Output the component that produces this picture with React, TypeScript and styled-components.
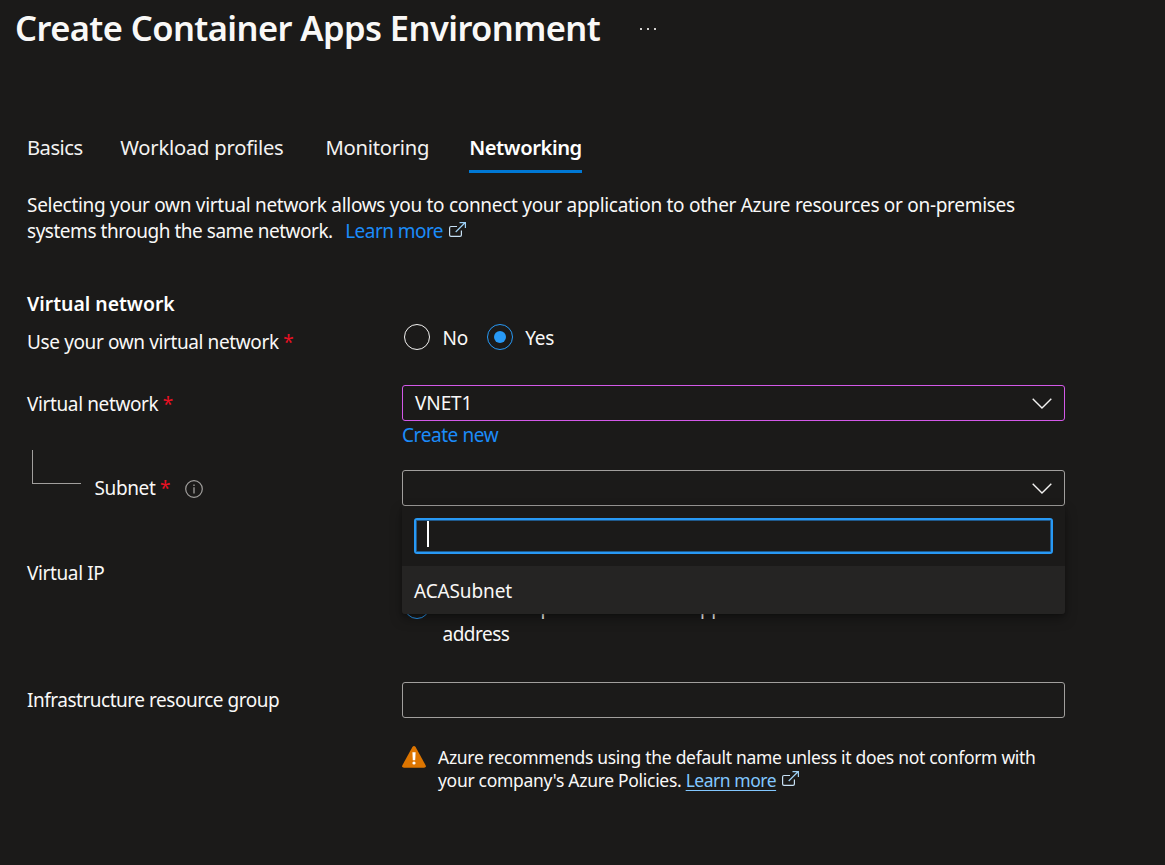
import React from 'react';
import styled, { createGlobalStyle, css } from 'styled-components';

const Global = createGlobalStyle`
  body {
    margin: 0;
    background: #1b1a19;
    color: #f9f8f7;
    font-family: "Noto Sans", sans-serif;
    font-size: 19px;
    line-height: 26px;
    letter-spacing: -0.295px;
  }
  * { box-sizing: border-box; }
`;

const Page = styled.main`
  height: 865px;
  overflow: hidden;
`;

const Header = styled.header`
  display: flex;
  align-items: center;
  height: 56px;
  padding-left: 15px;
`;

const Title = styled.h1`
  margin: 0;
  width: 623px;
  font-size: 34.5px;
  font-weight: 600;
  line-height: 56px;
  letter-spacing: -0.58px;
  white-space: nowrap;
`;

const MoreIcon = styled.svg`
  display: block;
  margin-top: 2px;
`;

const Tabs = styled.nav`
  display: flex;
  margin: 71px 0 0 27px;
`;

const Tab = styled.button<{ $active?: boolean; $gap: number; $spacing: number }>`
  height: 46px;
  margin: 0 ${(p) => p.$gap}px 0 0;
  padding: 0 0 3px;
  border: 0;
  border-bottom: 3px solid ${(p) => (p.$active ? '#0078d4' : 'transparent')};
  background: none;
  color: ${(p) => (p.$active ? '#ffffff' : '#f3f2f1')};
  font-family: inherit;
  font-size: 20.2px;
  font-weight: ${(p) => (p.$active ? 600 : 400)};
  letter-spacing: ${(p) => p.$spacing}px;
  white-space: nowrap;
`;

const Intro = styled.p`
  margin: 19px 0 0 27px;
  white-space: nowrap;
`;

const IntroEnd = styled.span`
  letter-spacing: -0.47px;
`;

const Link = styled.a<{ $inset?: number; $underlined?: boolean }>`
  margin-left: ${(p) => p.$inset ?? 0}px;
  color: #1b8cf9;
  letter-spacing: -0.55px;
  text-decoration: none;
  ${(p) =>
    p.$underlined &&
    css`
      color: #82c7ff;
      letter-spacing: -0.47px;
      text-decoration: underline;
      text-underline-offset: 3px;
      text-decoration-skip-ink: none;
    `}
`;

const OutIcon = styled.svg`
  margin-left: 6px;
  vertical-align: 1px;
`;

const SectionTitle = styled.h2`
  margin: 47px 0 7px 27px;
  font-size: 19.4px;
  font-weight: 600;
  line-height: 26px;
  letter-spacing: 0;
  color: #ffffff;
`;

const Row = styled.div<{ $height: number }>`
  display: grid;
  grid-template-columns: 375px 663px;
  align-items: start;
  height: ${(p) => p.$height}px;
  margin-left: 27px;
`;

const Label = styled.label<{ $top: number; $spacing?: number }>`
  display: flex;
  align-items: center;
  padding-top: ${(p) => p.$top}px;
  letter-spacing: ${(p) => p.$spacing ?? -0.38}px;
  white-space: nowrap;
`;

const Required = styled.span`
  margin-left: 4.5px;
  color: #e81123;
`;

const SubLabel = styled.div`
  display: flex;
  align-items: flex-start;
`;

const Connector = styled.span`
  width: 49px;
  height: 34px;
  margin: 0 13.5px 0 5px;
  border-left: 1px solid #a19f9d;
  border-bottom: 1px solid #a19f9d;
`;

const InfoIcon = styled.svg`
  margin: 1px 0 0 14.5px;
`;

const RadioGroup = styled.div<{ $top?: number }>`
  display: flex;
  gap: 19px;
  padding: ${(p) => p.$top ?? 0}px 0 0 2px;
`;

const RadioOption = styled.div`
  display: flex;
  align-items: flex-start;
  gap: 12.5px;
`;

const Radio = styled.span<{ $checked?: boolean }>`
  display: grid;
  place-items: center;
  flex: none;
  width: 26px;
  height: 26px;
  border: 1.5px solid ${(p) => (p.$checked ? '#2899f5' : '#f3f2f1')};
  border-radius: 50%;

  &::after {
    content: '';
    width: 12px;
    height: 12px;
    border-radius: 50%;
    background: ${(p) => (p.$checked ? '#2899f5' : 'transparent')};
  }
`;

const RadioText = styled.span`
  padding-top: 1px;
`;

const RadioParagraph = styled.span`
  padding-top: 1px;
  line-height: 27px;
  letter-spacing: -0.5px;
`;

const Field = styled.div<{ $top?: number }>`
  position: relative;
  padding-top: ${(p) => p.$top ?? 0}px;
`;

const SelectBox = styled.div<{ $color: string }>`
  display: flex;
  align-items: center;
  justify-content: space-between;
  height: 36px;
  padding: 0 12px;
  border: 1px solid ${(p) => p.$color};
  border-radius: 3px;
  letter-spacing: -0.1px;
`;

const CreateNew = styled.a`
  display: block;
  padding-top: 1px;
  color: #1b8cf9;
  letter-spacing: -0.42px;
`;

const Menu = styled.div`
  position: absolute;
  z-index: 1;
  top: 56px;
  left: 0;
  width: 663px;
  border-radius: 0 0 3px 3px;
  background: #1b1a19;
  box-shadow: 0 5px 12px rgba(0, 0, 0, 0.34), 0 1px 3px rgba(0, 0, 0, 0.2);
`;

const Search = styled.div`
  height: 36px;
  margin: 12px;
  padding: 1px 11px;
  border: 2px solid #2899f5;
  border-radius: 3px;
  box-shadow: inset 0 0 0 1px #205a8c;
`;

const Caret = styled.span`
  display: block;
  width: 2px;
  height: 26px;
  background: #ffffff;
`;

const Option = styled.div`
  height: 48px;
  padding-left: 12px;
  border-radius: 0 0 3px 3px;
  background: #252423;
  line-height: 50px;
  letter-spacing: -0.12px;
`;

const Notice = styled.div`
  display: flex;
  align-items: flex-start;
  gap: 12px;
  margin: 28px 0 0 402px;
  font-size: 17.5px;
  line-height: 23px;
  letter-spacing: -0.3px;
  white-space: nowrap;
`;

const ChevronDown = () => (
  <svg width="20" height="11" viewBox="0 0 20 11" fill="none" stroke="#f3f2f1" strokeWidth="1.4">
    <path d="M0.7 0.8L10 10L19.3 0.8" />
  </svg>
);

const OpenOut = () => (
  <OutIcon width="17" height="15" viewBox="0 0 17 15" fill="none" strokeWidth="1.2">
    <path d="M8 4.5H2Q.6 4.5 .6 5.9V13Q.6 14.4 2 14.4H11Q12.4 14.4 12.4 13V8.5" stroke="#c7e0f4" />
    <path d="M6.7 10L16 .8M10.5 .6H16.4V6" stroke="#9dd0f5" />
  </OutIcon>
);

const Warning = () => (
  <svg width="24" height="22" viewBox="0 0 24 22">
    <path d="M10.4 1Q12 -1 13.6 1L23.6 19.2Q24.5 21.6 22 21.8H2Q-.5 21.6 .4 19.2Z" fill="#dd7500" />
    <path d="M10.4 6.2H13.6L13.2 14.3H10.8Z" fill="#fff" />
    <circle cx="12" cy="17" r="1.6" fill="#fff" />
  </svg>
);

export default function App() {
  return (
    <Page>
      <Global />
      <Header>
        <Title>Create Container Apps Environment</Title>
        <MoreIcon width="20" height="4" viewBox="0 0 20 4" fill="#d2d0ce">
          <rect x="2" y="1" width="2" height="2" />
          <rect x="9" y="1" width="2" height="2" />
          <rect x="16" y="1" width="2" height="2" />
        </MoreIcon>
      </Header>

      <Tabs>
        <Tab $gap={37.5} $spacing={-0.5}>Basics</Tab>
        <Tab $gap={42} $spacing={-0.22}>Workload profiles</Tab>
        <Tab $gap={40} $spacing={-0.25}>Monitoring</Tab>
        <Tab $gap={0} $spacing={-0.45} $active>Networking</Tab>
      </Tabs>

      <Intro>
        Selecting your own virtual network allows you to connect your application to other Azure resources or on-premises
        <br />
        <IntroEnd>systems through the same network.</IntroEnd>
        <Link $inset={12.5}>Learn more</Link>
        <OpenOut />
      </Intro>

      <SectionTitle>Virtual network</SectionTitle>

      <Row $height={61}>
        <Label $top={5}>Use your own virtual network<Required>*</Required></Label>
        <RadioGroup>
          <RadioOption><Radio /><RadioText>No</RadioText></RadioOption>
          <RadioOption><Radio $checked /><RadioText>Yes</RadioText></RadioOption>
        </RadioGroup>
      </Row>

      <Row $height={65}>
        <Label $top={6}>Virtual network<Required>*</Required></Label>
        <Field>
          <SelectBox $color="#d359e8">VNET1<ChevronDown /></SelectBox>
          <CreateNew>Create new</CreateNew>
        </Field>
      </Row>

      <Row $height={108}>
        <SubLabel>
          <Connector />
          <Label $top={25}>
            Subnet<Required>*</Required>
            <InfoIcon width="18" height="18" viewBox="0 0 18 18" fill="none" stroke="#a19f9d">
              <circle cx="9" cy="9" r="8.3" strokeWidth="1.2" />
              <path d="M9 7.3V13.4M9 4.4V6" strokeWidth="1.3" />
            </InfoIcon>
          </Label>
        </SubLabel>
        <Field $top={20}>
          <SelectBox $color="#a19f9d"><span /><ChevronDown /></SelectBox>
          <Menu>
            <Search><Caret /></Search>
            <Option>ACASubnet</Option>
          </Menu>
        </Field>
      </Row>

      <Row $height={124}>
        <Label $top={2}>Virtual IP</Label>
        <RadioGroup $top={35}>
          <RadioOption>
            <Radio $checked />
            <RadioParagraph>
              External: Exposes the hosted apps on an internet-accessible IP
              <br />
              address
            </RadioParagraph>
          </RadioOption>
        </RadioGroup>
      </Row>

      <Row $height={36}>
        <Label $top={5} $spacing={-0.48}>Infrastructure resource group</Label>
        <SelectBox $color="#a19f9d" />
      </Row>

      <Notice>
        <Warning />
        <div>
          Azure recommends using the default name unless it does not conform with
          <br />
          your company&apos;s Azure Policies. <Link $underlined>Learn more</Link>
          <OpenOut />
        </div>
      </Notice>
    </Page>
  );
}
